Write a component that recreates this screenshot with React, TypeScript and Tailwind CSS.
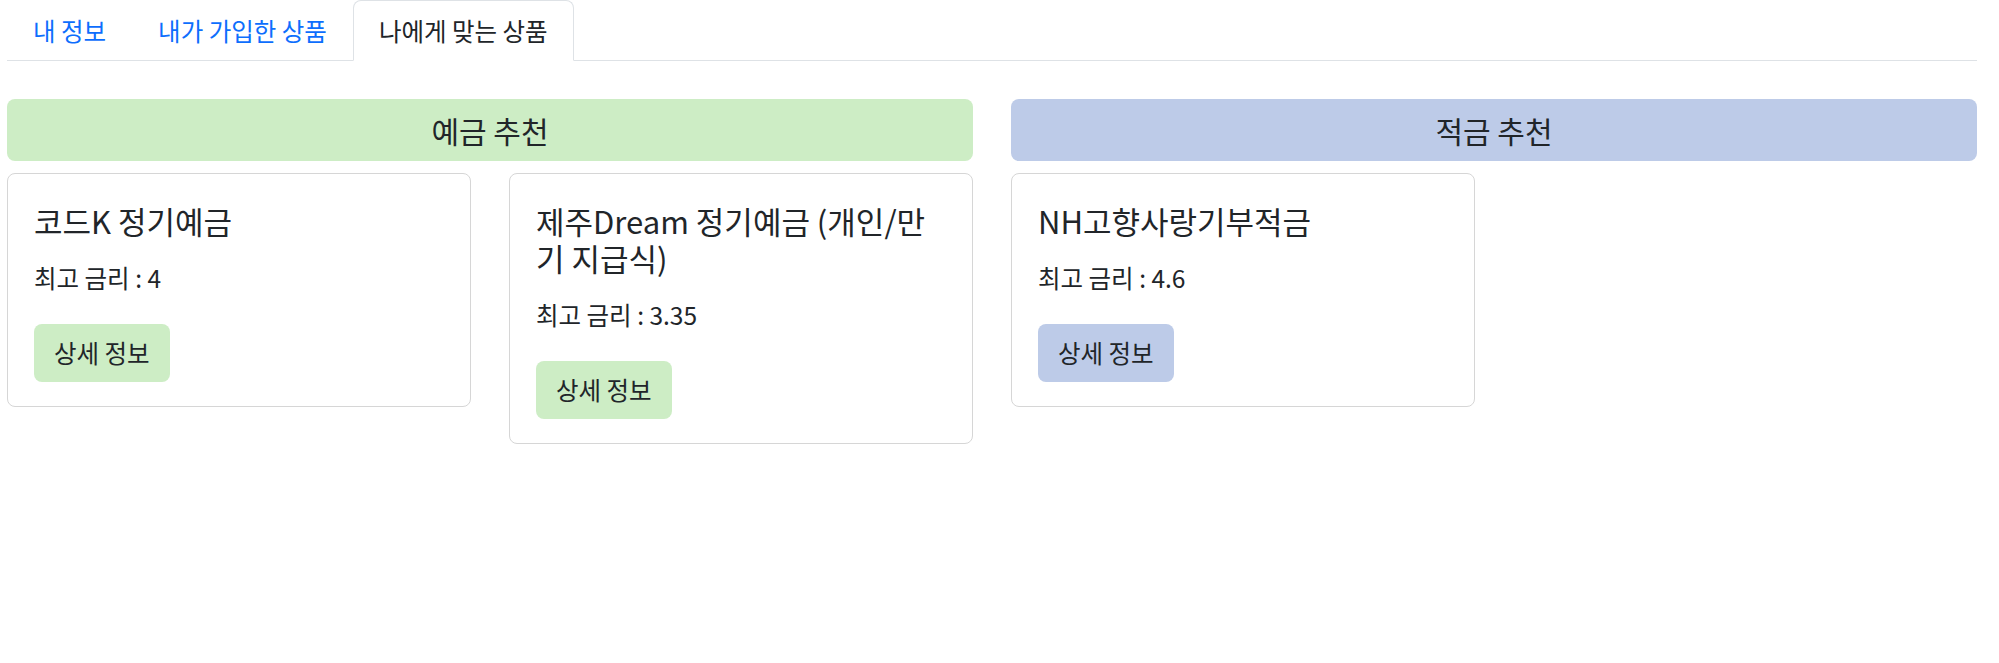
import React, { useState } from 'react';

interface Product {
  name: string;
  rate: string;
}

const deposits: Product[] = [
  { name: '코드K 정기예금', rate: '4' },
  { name: '제주Dream 정기예금 (개인/만기 지급식)', rate: '3.35' },
];

const savings: Product[] = [{ name: 'NH고향사랑기부적금', rate: '4.6' }];

const tabs = ['내 정보', '내가 가입한 상품', '나에게 맞는 상품'];

const ProductCard: React.FC<{ product: Product; accent: 'green' | 'blue' }> = ({
  product,
  accent,
}) => (
  <div className="flex flex-col items-start rounded-[8px] border border-[#d6d6d6] bg-white px-[26px] pt-[28px] pb-[24px]">
    <h5 className="mb-[24px] text-[31px] leading-[37px] text-[#212529]">{product.name}</h5>
    <p className="mb-[31px] text-[24.5px] leading-[30px] text-[#212529]">
      최고 금리 : {product.rate}
    </p>
    <button
      type="button"
      className={`h-[58px] rounded-[8px] px-[20px] text-[24.5px] text-[#212529] ${
        accent === 'green' ? 'bg-[#cdedc5]' : 'bg-[#bdcbe8]'
      }`}
    >
      상세 정보
    </button>
  </div>
);

const Section: React.FC<{ title: string; items: Product[]; accent: 'green' | 'blue' }> = ({
  title,
  items,
  accent,
}) => (
  <div className="flex flex-col">
    <div
      className={`flex h-[62px] items-center justify-center rounded-[8px] text-[30px] text-[#212529] ${
        accent === 'green' ? 'bg-[#cdedc5]' : 'bg-[#bdcbe8]'
      }`}
    >
      {title}
    </div>
    <div className="mt-[12px] grid grid-cols-2 items-start gap-[38px]">
      {items.map((p) => (
        <ProductCard key={p.name} product={p} accent={accent} />
      ))}
    </div>
  </div>
);

export default function App() {
  const [active, setActive] = useState(2);

  return (
    <div
      className="min-h-screen bg-white"
      style={{ fontFamily: '"Noto Sans CJK KR", "Noto Sans", sans-serif' }}
    >
      <div className="ml-[7px] w-[1970px]">
        <ul className="flex border-b border-[#dee2e6]">
          {tabs.map((t, i) => (
            <li key={t} className="-mb-px">
              <button
                type="button"
                onClick={() => setActive(i)}
                className={`block h-[61px] rounded-t-[8px] border px-[25px] text-[24.5px] leading-[30px] ${
                  active === i
                    ? 'border-[#dee2e6] border-b-white bg-white text-[#212529]'
                    : 'border-transparent text-[#0d6efd]'
                }`}
              >
                {t}
              </button>
            </li>
          ))}
        </ul>

        <div className="mt-[38px] grid grid-cols-2 gap-[38px]">
          <Section title="예금 추천" items={deposits} accent="green" />
          <Section title="적금 추천" items={savings} accent="blue" />
        </div>
      </div>
    </div>
  );
}
